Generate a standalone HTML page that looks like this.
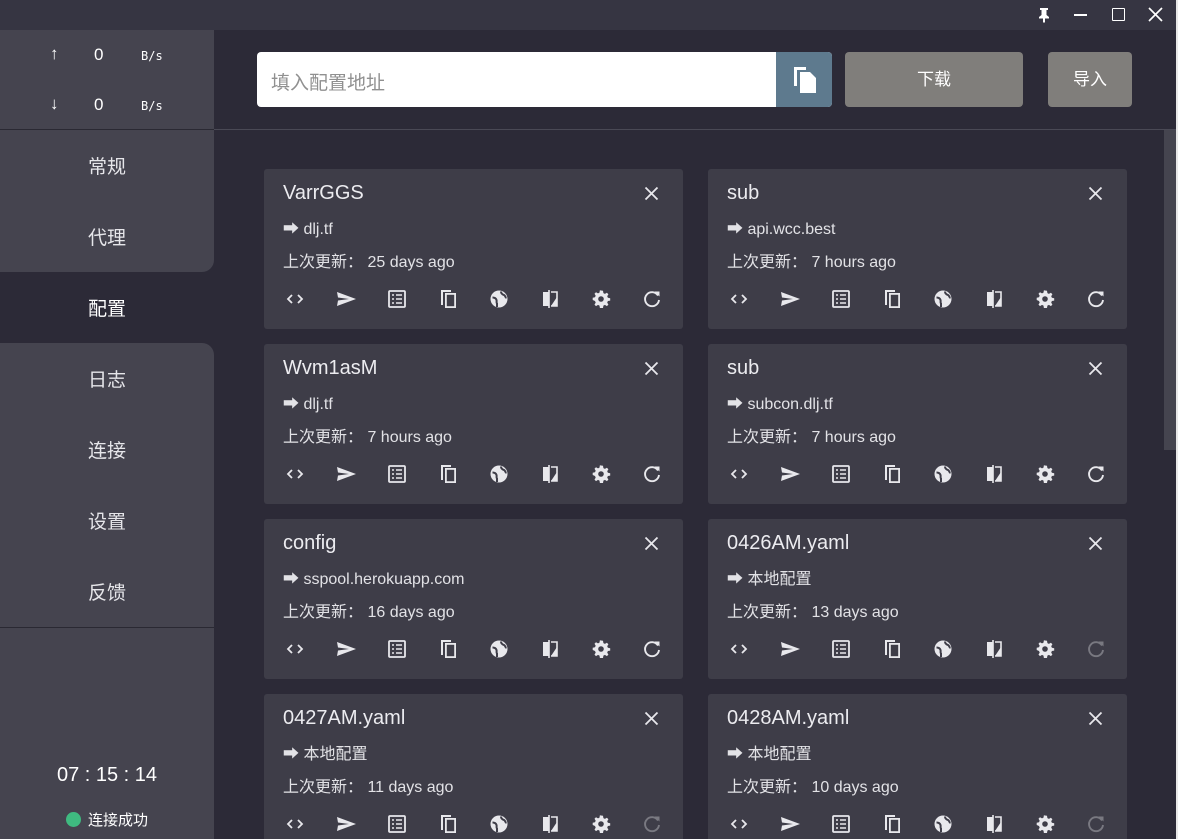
<!DOCTYPE html>
<html><head><meta charset="utf-8"><style>
*{margin:0;padding:0;box-sizing:border-box}
html,body{width:1178px;height:839px;overflow:hidden}
body{background:#2c2a37;font-family:"Liberation Sans","Noto Sans CJK SC",sans-serif;color:#e8e8ec;position:relative}
.abs{position:absolute}
#tb{left:0;top:0;width:1178px;height:30px;background:#363542}
#side{left:0;top:30px;width:214px;height:809px;background:#45444f}
.nav{position:absolute;left:0;width:214px;height:71px;line-height:71px;text-align:center;font-size:19px;color:#e6e6ea}
.card{position:absolute;width:419px;height:160px;background:#3e3d48;border-radius:3px}
.card .t{position:absolute;left:19px;top:13px;font-size:20px;color:#ececf0}
.card .s{position:absolute;left:19px;top:46px;font-size:16px;color:#e2e2e6}
.card .u{position:absolute;left:19px;top:79px;font-size:16px;color:#e2e2e6}
.card .x{position:absolute;left:380px;top:17px}
.card .ic{position:absolute;top:120px;width:20px;height:20px}
</style></head><body>
<div id="tb" class="abs"></div>
<svg class="abs" style="left:1036px;top:7px" width="16" height="16" viewBox="0 0 16 16"><path d="M4 1h8v2h-1.5v5l2.5 2v1.5H9v4H7v-4H3V10l2.5-2V3H4z" fill="#fff"/></svg>
<div class="abs" style="left:1074px;top:14px;width:13px;height:2px;background:#fff"></div>
<div class="abs" style="left:1112px;top:8px;width:13px;height:13px;border:1.6px solid #fff;border-radius:1px"></div>
<svg class="abs" style="left:1148px;top:7px" width="15" height="15" viewBox="0 0 15 15"><path d="M1 1L14 14M14 1L1 14" stroke="#fff" stroke-width="1.7"/></svg>
<div class="abs" style="left:1176px;top:0;width:2px;height:839px;background:#e8e8e8"></div>

<div id="side" class="abs"></div>
<div class="abs" style="left:0;top:129px;width:214px;height:1px;background:#2a2933"></div>
<div class="abs" style="left:214px;top:129px;width:962px;height:1px;background:#4a4955"></div>
<div class="abs" style="left:50px;top:44px;font-size:17px;color:#fff">↑</div>
<div class="abs" style="left:94px;top:45px;font-size:17px;color:#fff">0</div>
<div class="abs" style="left:141px;top:49px;font-size:12px;color:#fff;font-family:'DejaVu Sans Mono',monospace">B/s</div>
<div class="abs" style="left:50px;top:94px;font-size:17px;color:#fff">↓</div>
<div class="abs" style="left:94px;top:95px;font-size:17px;color:#fff">0</div>
<div class="abs" style="left:141px;top:99px;font-size:12px;color:#fff;font-family:'DejaVu Sans Mono',monospace">B/s</div>

<div class="abs" style="left:0;top:240px;width:214px;height:135px;background:#2c2a37"></div>
<div class="abs" style="left:0;top:130px;width:214px;height:142px;background:#45444f;border-bottom-right-radius:12px"></div>
<div class="abs" style="left:0;top:343px;width:214px;height:284px;background:#45444f;border-top-right-radius:12px"></div>
<div class="nav" style="top:132px">常规</div>
<div class="nav" style="top:203px">代理</div>
<div class="nav" style="top:274px;color:#fff">配置</div>
<div class="nav" style="top:345px">日志</div>
<div class="nav" style="top:416px">连接</div>
<div class="nav" style="top:487px">设置</div>
<div class="nav" style="top:558px">反馈</div>
<div class="abs" style="left:0;top:627px;width:214px;height:1px;background:#2a2933"></div>
<div class="abs" style="left:0;top:764px;width:214px;text-align:center;font-size:20px;color:#fff">07 : 15 : 14</div>
<div class="abs" style="left:66px;top:812px;width:15px;height:15px;border-radius:50%;background:#3fba80"></div>
<div class="abs" style="left:88px;top:809px;font-size:15px;color:#fff">连接成功</div>

<div class="abs" style="left:257px;top:52px;width:575px;height:55px;background:#fff;border-radius:4px;overflow:hidden">
<div class="abs" style="left:14px;top:16px;font-size:19px;color:#909090">填入配置地址</div>
<div class="abs" style="left:519px;top:0;width:56px;height:55px;background:#5e7a8e"></div>
<svg class="abs" style="left:532px;top:12px" width="32" height="32" viewBox="0 0 32 32"><path d="M5 3h12v3H8v16H5z" fill="#fff"/><path d="M11 8h10l6 6v15H11z" fill="#fff"/></svg>
</div>
<div class="abs" style="left:845px;top:52px;width:178px;height:55px;background:#807e7b;border-radius:4px;text-align:center;line-height:55px;font-size:17px;color:#fff">下载</div>
<div class="abs" style="left:1048px;top:52px;width:84px;height:55px;background:#807e7b;border-radius:4px;text-align:center;line-height:55px;font-size:17px;color:#fff">导入</div>

<div class="abs" style="left:1164px;top:130px;width:12px;height:320px;background:#45444f"></div>

<div id="cards"></div>
<svg width="0" height="0" style="position:absolute"><defs>
<g id="i0"><path d="M7 6l-4 4 4 4M13 6l4 4-4 4" stroke="#e8e8ec" stroke-width="1.8" fill="none"/></g>
<g id="i1"><path d="M1 3l19 7-19 7 1-5.5 11-1.5-11-1.5z" fill="#e8e8ec"/></g>
<g id="i2"><rect x="2" y="2" width="16" height="16" rx="1" fill="none" stroke="#e8e8ec" stroke-width="1.8"/><path d="M5 6h2M9 6h6M5 10h2M9 10h6M5 14h2M9 14h6" stroke="#e8e8ec" stroke-width="1.6"/></g>
<g id="i3"><path d="M3 1h10v2H5v13H3z" fill="#e8e8ec"/><rect x="7.9" y="4.9" width="9.2" height="13.2" fill="none" stroke="#e8e8ec" stroke-width="1.8"/></g>
<g id="i4"><circle cx="10" cy="10" r="8.5" fill="#e8e8ec"/><path d="M3.5 8.5c2 0 3.5 1 4 2.5s-.5 2.5.5 3.5v3.5" stroke="#3e3d48" stroke-width="2" fill="none"/><path d="M12 2.5c0 2 1.5 3 3 3.5s1 2.5 2.5 3" stroke="#3e3d48" stroke-width="2" fill="none"/></g>
<g id="i5"><path d="M3 3h6v14H3z" fill="#e8e8ec"/><path d="M9 1v18" stroke="#e8e8ec" stroke-width="1.6"/><path d="M11 3h6v14h-6" stroke="#e8e8ec" stroke-width="1.6" fill="none"/><path d="M11 17l6-9v9z" fill="#e8e8ec"/></g>
<g id="i6"><path d="M10 1.5l2 .3.4 2.3 1.5.8 2-1.2 1.5 1.5-1.2 2 .7 1.6 2.3.4v2.4l-2.3.4-.7 1.6 1.2 2-1.5 1.5-2-1.2-1.5.7-.4 2.4H8.9l-.4-2.4-1.5-.7-2 1.2-1.5-1.5 1.2-2-.7-1.6L1.7 11V8.7l2.3-.4.7-1.6-1.2-2L5 3.2l2 1.2 1.5-.8.4-2.3z" fill="#e8e8ec"/><circle cx="10" cy="10" r="2.8" fill="#3e3d48"/></g>
<g id="i7"><path d="M16 6.5A7 7 0 1 0 17 11" stroke="#e8e8ec" stroke-width="1.9" fill="none"/><path d="M12.5 2.5H17.5V7.5z" fill="#e8e8ec"/></g>
</defs></svg>
<script>
var d=[["VarrGGS","dlj.tf","25 days ago",1],["sub","api.wcc.best","7 hours ago",1],["Wvm1asM","dlj.tf","7 hours ago",1],["sub","subcon.dlj.tf","7 hours ago",1],["config","sspool.herokuapp.com","16 days ago",1],["0426AM.yaml","本地配置","13 days ago",0],["0427AM.yaml","本地配置","11 days ago",0],["0428AM.yaml","本地配置","10 days ago",0]];
var h="";
d.forEach(function(c,i){var x=i%2?708:264,y=169+Math.floor(i/2)*175;
h+='<div class="card" style="left:'+x+'px;top:'+y+'px"><div class="t">'+c[0]+'</div><div class="s">➡ '+c[1]+'</div><div class="u">上次更新：&nbsp;'+c[2]+'</div>';
h+='<svg class="x" width="15" height="15" viewBox="0 0 15 15"><path d="M1.5 1.5l12 12M13.5 1.5l-12 12" stroke="#e8e8ec" stroke-width="1.8"/></svg>';
for(var k=0;k<8;k++){h+='<svg class="ic" style="left:'+(21+k*51)+'px'+(k==7&&!c[3]?';opacity:.35':'')+'" viewBox="0 0 20 20"><use href="#i'+k+'"/></svg>';}
h+='</div>';});
document.getElementById("cards").innerHTML=h;
</script>
</body></html>
